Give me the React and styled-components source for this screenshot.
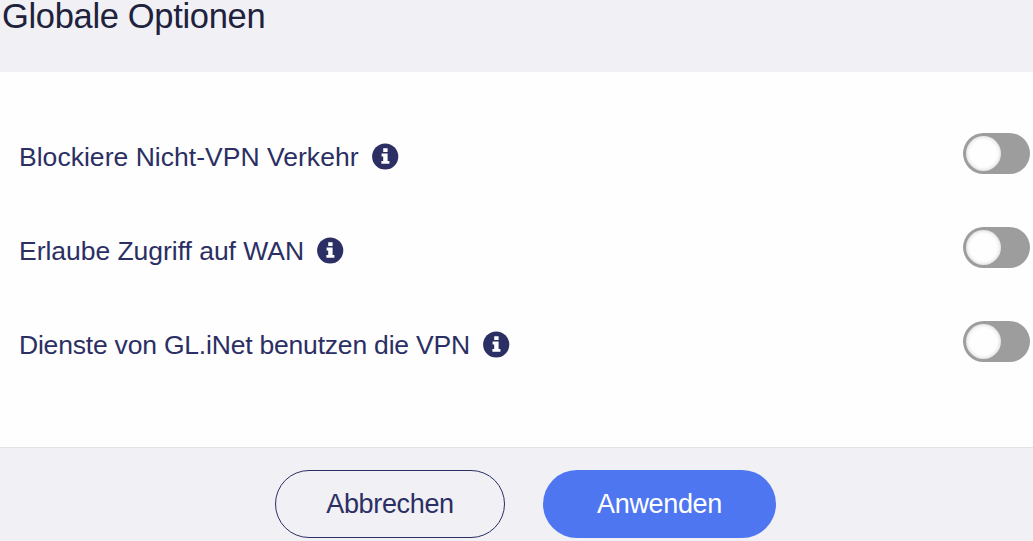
import React from 'react';
import styled, { createGlobalStyle } from 'styled-components';

const GlobalStyle = createGlobalStyle`
  body {
    margin: 0;
    overflow: hidden;
    font-family: 'Liberation Sans', Arial, sans-serif;
  }
`;

const Dialog = styled.section`
  box-sizing: border-box;
  display: flex;
  flex-direction: column;
  width: 100%;
  height: 541px;
  overflow: hidden;
  color: #2b2f63;
  background-color: #f0f0f5;
`;

const Header = styled.header`
  flex: none;
  height: 72px;
`;

const Title = styled.h2`
  margin: 0 0 0 2px;
  color: #20213c;
  font-size: 34.5px;
  font-weight: 400;
  letter-spacing: -0.33px;
  line-height: 32px;
`;

const List = styled.ul`
  box-sizing: border-box;
  flex: none;
  height: 376px;
  margin: 0;
  padding: 34px 3px 0 19px;
  list-style: none;
  background-color: #fefefe;
  border-bottom: 1px solid #e2e2e6;
`;

const ListItem = styled.li`
  display: flex;
  align-items: center;
  justify-content: space-between;
  height: 94px;
`;

const Label = styled.span`
  display: flex;
  align-items: center;
  gap: 13px;
  padding-top: 7px;
  font-size: 26.5px;
  letter-spacing: ${({ $spacing }) => $spacing || '0'};
  line-height: 32px;
`;

const Icon = styled.svg`
  display: block;
  width: 27px;
  height: 27px;
  margin-top: -1px;
`;

const Switch = styled.button`
  box-sizing: border-box;
  width: 67px;
  height: 41px;
  padding: 3px;
  border: 0;
  border-radius: 21px;
  background-color: #9d9d9d;
`;

const Knob = styled.span`
  display: block;
  width: 35px;
  height: 35px;
  border-radius: 50%;
  background-color: #fefefe;
  box-shadow: inset 0 0 4px rgba(0, 0, 0, 0.22);
`;

const Footer = styled.footer`
  display: flex;
  flex: 1;
  gap: 38px;
  padding: 22px 0 0 275px;
`;

const Button = styled.button`
  box-sizing: border-box;
  width: ${({ $primary }) => ($primary ? '233px' : '230px')};
  height: 68px;
  border: ${({ $primary }) => ($primary ? '0' : '1px solid #2b2f63')};
  border-radius: 34px;
  color: ${({ $primary }) => ($primary ? '#fff' : '#2b2f63')};
  background-color: ${({ $primary }) => ($primary ? '#4e76f1' : 'transparent')};
  font-family: inherit;
  font-size: 27px;
  letter-spacing: -0.35px;
`;

const InfoIcon = () => (
  <Icon viewBox="0 0 27 27" aria-hidden="true">
    <circle cx="13.2" cy="13.5" r="13.1" fill="#2b2f63" />
    <path
      d="M11.2 5.3h4.4v3.6h-4.4zM9.6 10.6h6v7.3h1.8v2.8H9.4v-2.8h1.8v-4.5H9.6z"
      fill="#fff"
    />
  </Icon>
);

const options = [
  { id: 'block', label: 'Blockiere Nicht-VPN Verkehr', spacing: '0.03px' },
  { id: 'wan', label: 'Erlaube Zugriff auf WAN', spacing: '-0.03px' },
  {
    id: 'services',
    label: 'Dienste von GL.iNet benutzen die VPN',
    spacing: '-0.2px',
  },
];

const App = () => (
  <>
    <GlobalStyle />
    <Dialog>
      <Header>
        <Title>Globale Optionen</Title>
      </Header>
      <List>
        {options.map(option => (
          <ListItem key={option.id}>
            <Label $spacing={option.spacing}>
              {option.label}
              <InfoIcon />
            </Label>
            <Switch type="button" role="switch" aria-checked="false">
              <Knob />
            </Switch>
          </ListItem>
        ))}
      </List>
      <Footer>
        <Button type="button">Abbrechen</Button>
        <Button type="button" $primary>
          Anwenden
        </Button>
      </Footer>
    </Dialog>
  </>
);

export default App;
